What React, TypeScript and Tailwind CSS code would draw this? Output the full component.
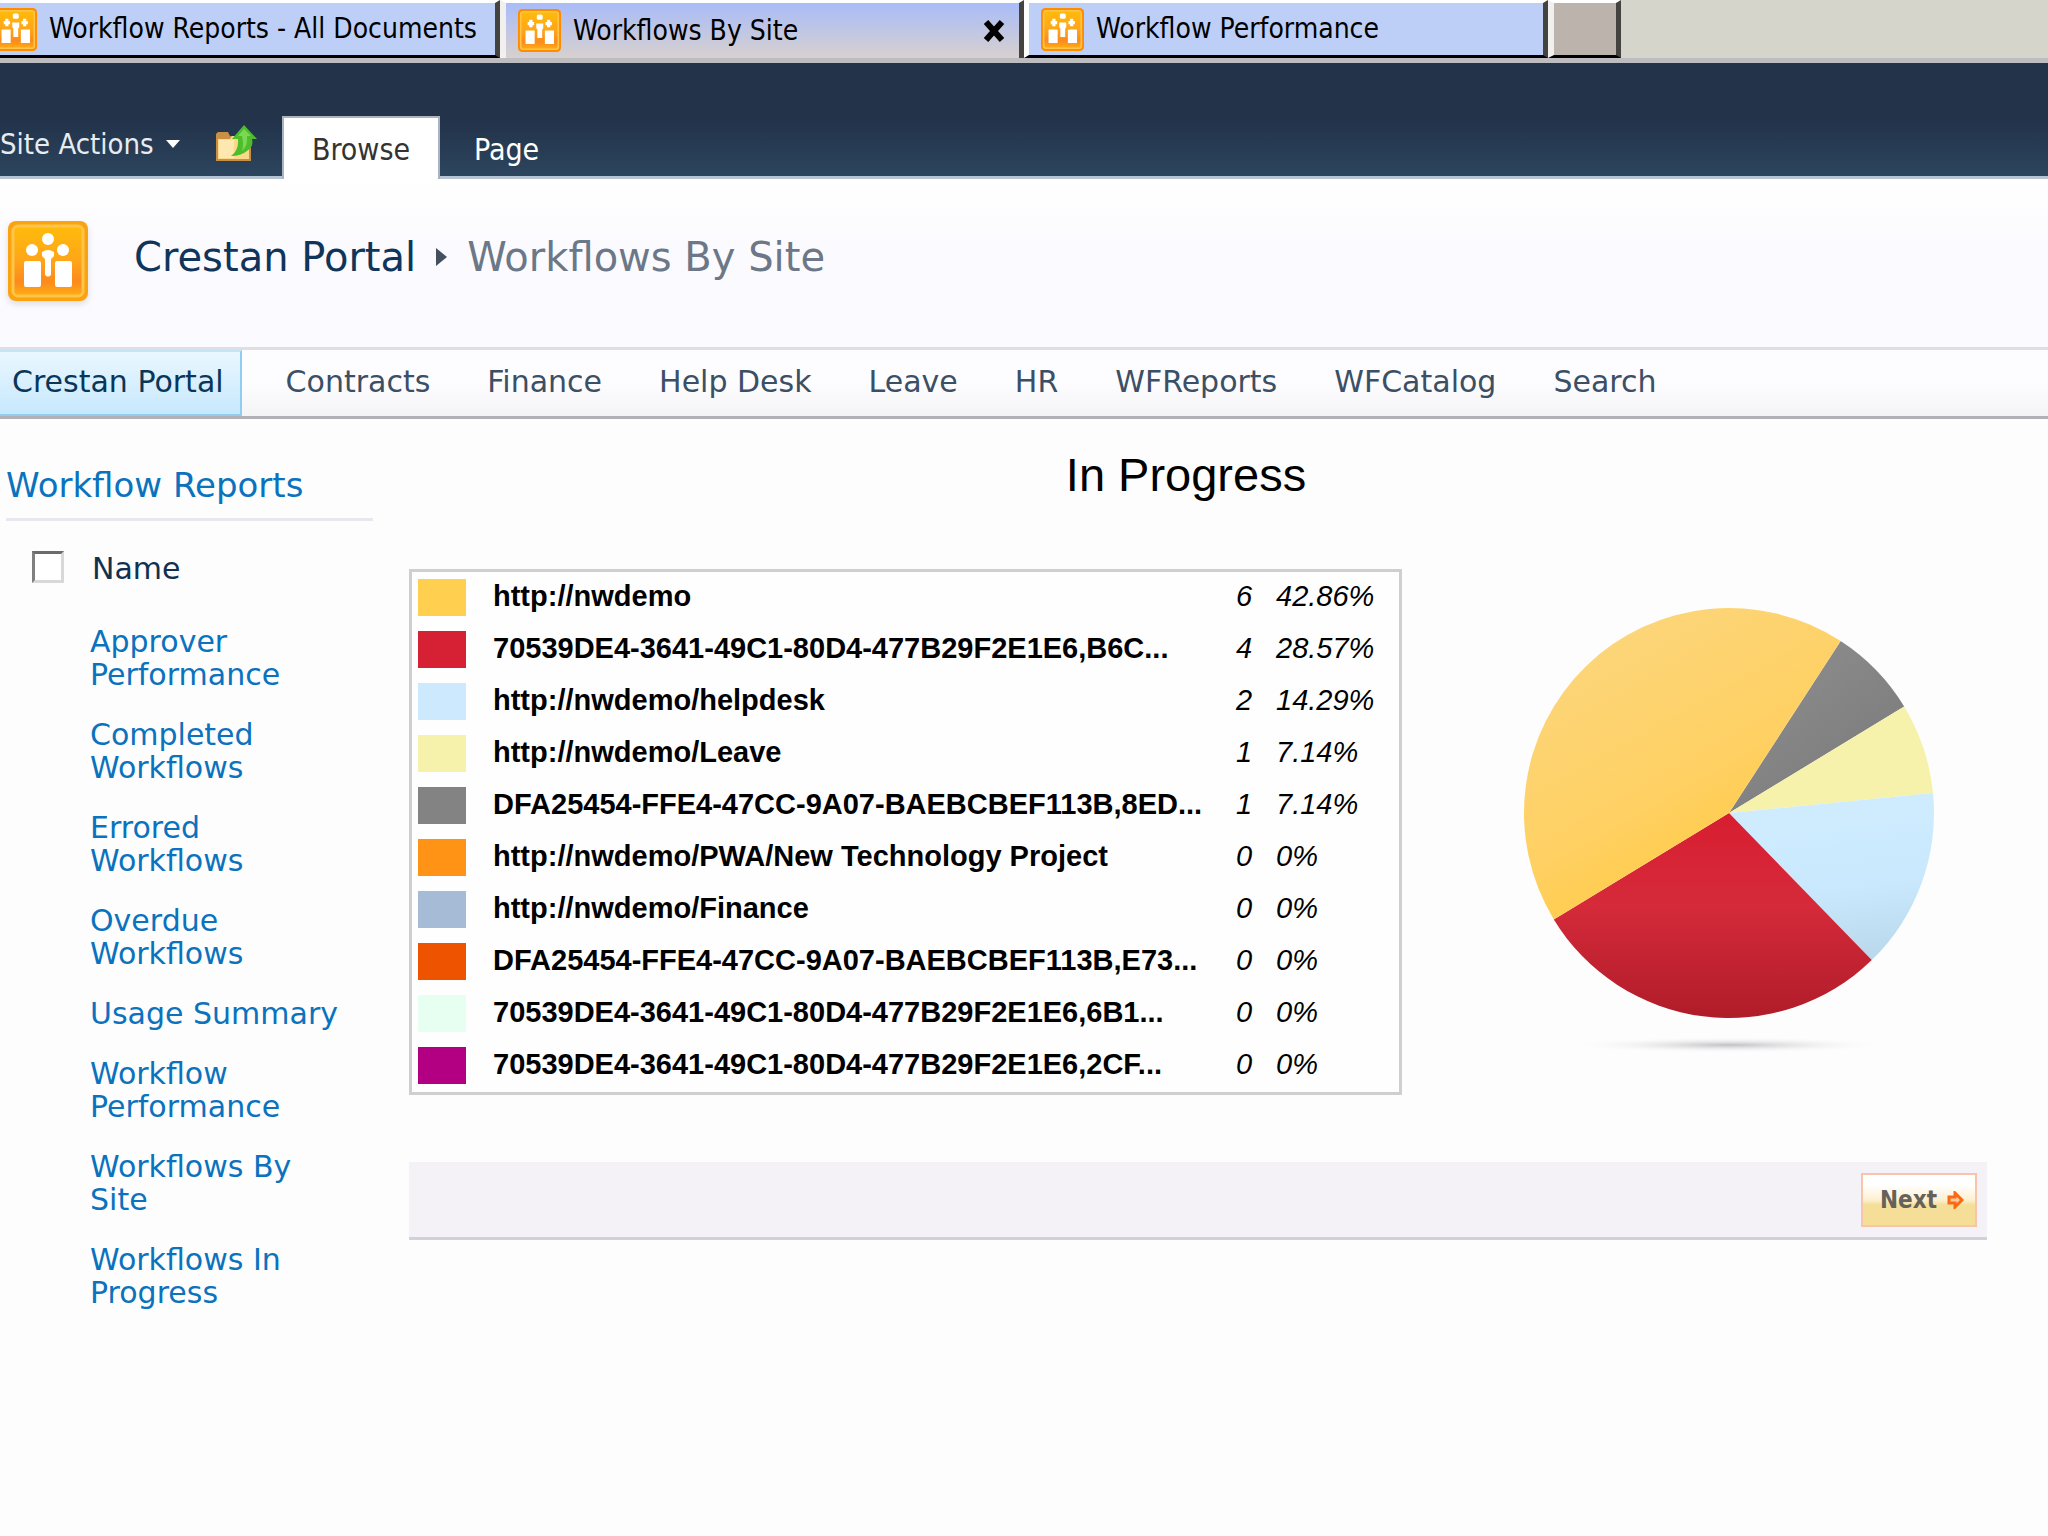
import React, { useState } from 'react';

const tabs = [
  { title: 'Workflow Reports - All Documents', className: 'w-[500px] pl-0', icon: '-ml-1.5' },
  { title: 'Workflows By Site', className: 'w-[524px] pl-3', icon: '' },
  { title: 'Workflow Performance', className: 'w-[524px] pl-3', icon: '' },
];

const navItems = ['Contracts', 'Finance', 'Help Desk', 'Leave', 'HR', 'WFReports', 'WFCatalog', 'Search'];

const reports = [
  'Approver Performance',
  'Completed Workflows',
  'Errored Workflows',
  'Overdue Workflows',
  'Usage Summary',
  'Workflow Performance',
  'Workflows By Site',
  'Workflows In Progress',
];

const sites = [
  { color: 'bg-[#ffcf50]', name: 'http://nwdemo', count: 6, percent: '42.86%' },
  { color: 'bg-[#d62033]', name: '70539DE4-3641-49C1-80D4-477B29F2E1E6,B6C...', count: 4, percent: '28.57%' },
  { color: 'bg-[#cde9fd]', name: 'http://nwdemo/helpdesk', count: 2, percent: '14.29%' },
  { color: 'bg-[#f6f2ab]', name: 'http://nwdemo/Leave', count: 1, percent: '7.14%' },
  { color: 'bg-[#838383]', name: 'DFA25454-FFE4-47CC-9A07-BAEBCBEF113B,8ED...', count: 1, percent: '7.14%' },
  { color: 'bg-[#ff9315]', name: 'http://nwdemo/PWA/New Technology Project', count: 0, percent: '0%' },
  { color: 'bg-[#a5bbd6]', name: 'http://nwdemo/Finance', count: 0, percent: '0%' },
  { color: 'bg-[#ee5400]', name: 'DFA25454-FFE4-47CC-9A07-BAEBCBEF113B,E73...', count: 0, percent: '0%' },
  { color: 'bg-[#e6fff0]', name: '70539DE4-3641-49C1-80D4-477B29F2E1E6,6B1...', count: 0, percent: '0%' },
  { color: 'bg-[#b30083]', name: '70539DE4-3641-49C1-80D4-477B29F2E1E6,2CF...', count: 0, percent: '0%' },
];

// clockwise from the top, in fourteenths of the circle
const slices = [
  { fill: 'url(#sliceGrey)', share: 1 },
  { fill: '#f6f2ab', share: 1 },
  { fill: 'url(#sliceBlue)', share: 2 },
  { fill: 'url(#sliceRed)', share: 4 },
  { fill: 'url(#sliceYellow)', share: 6 },
];

const SiteIcon: React.FC<{ className?: string; small?: boolean }> = ({ className = '', small = false }) => (
  <svg viewBox="0 0 80 80" className={`shrink-0 ${className}`} aria-hidden="true">
    <defs>
      <linearGradient id="siteIcon" x1="0" y1="0" x2="0" y2="1">
        <stop offset="0" stopColor="#ffbb0a" />
        <stop offset="0.5" stopColor="#ffa519" />
        <stop offset="0.8" stopColor="#fc8a1c" />
        <stop offset="1" stopColor="#ffae14" />
      </linearGradient>
    </defs>
    <rect x="0" y="0" width="80" height="80" rx="8" fill={small ? '#ff8c00' : '#fba211'} />
    <rect x="5" y="5" width="70" height="70" rx="5" fill="url(#siteIcon)" stroke="#ffc549" strokeWidth="3" />
    {small ? (
      <g fill="#fff">
        <rect x="35" y="10" width="11" height="10" rx="3" />
        <path d="M21 20 H27 V24 H30 V30 H27 V34 H21 V30 H18 V24 H21 Z" />
        <path d="M54 20 H60 V24 H63 V30 H60 V34 H54 V30 H51 V24 H54 Z" />
        <path d="M34 27 H47 V36 L45 38 V54 H36 V38 L34 36 Z" />
        <rect x="14" y="40" width="17" height="25" rx="1" />
        <rect x="50" y="40" width="17" height="25" rx="1" />
      </g>
    ) : (
      <g fill="#fff">
        <circle cx="40" cy="18" r="6" />
        <circle cx="24" cy="29" r="6" />
        <circle cx="55" cy="29" r="6" />
        <path d="M34 31 Q40 27 46 31 L46 35 L43 38 V54 Q40 57 37 54 V38 L34 35 Z" />
        <rect x="16" y="40" width="17" height="26" rx="2" />
        <rect x="47" y="40" width="17" height="26" rx="2" />
      </g>
    )}
  </svg>
);

const FolderUpIcon: React.FC = () => (
  <svg viewBox="0 0 44 38" className="h-[38px] w-11" aria-hidden="true">
    <path d="M2 9 L4 7 H14 L16 11 H37 V36 H2 Z" fill="#c98f45" />
    <path d="M4 14 H16 L18 11 H35 V34 H4 Z" fill="#fbd98a" />
    <path d="M5 15 H20 V33 H5 Z" fill="#ffe7b0" />
    <path d="M30 0 L43 14 H38 Q40 22 33 26 Q27 31 17 31 Q25 25 24 14 H18 Z" fill="#4dbd2c" />
    <path d="M30 4 L37 11 H33 Q34 21 28 26 Q30 20 28 11 H24 Z" fill="#7bd854" />
  </svg>
);

const BrowserTabs: React.FC = () => {
  const [active, setActive] = useState(1);

  return (
    <div className="flex h-[63px] border-b-[5px] border-[#bcbcc1] bg-[#d5d5cc] font-['DejaVu_Sans_Condensed','DejaVu_Sans',sans-serif] text-[28px] leading-8 text-black">
      {tabs.map((tab, index) => (
        <div
          key={tab.title}
          className={`flex items-center border-t-[3px] border-r-[5px] border-r-[#45433f] border-t-white pr-3.5 ${tab.className} ${
            active === index
              ? 'border-l-[6px] border-l-[#f1f0ee] bg-linear-to-b from-[#a9bcf8] to-[#d7d0ce]'
              : 'border-b-[3px] border-l-[5px] border-b-black border-l-white bg-[#bdcff7] first:border-l-0'
          }`}
        >
          <button type="button" onClick={() => setActive(index)} className="flex flex-1 items-center gap-3 text-left whitespace-nowrap">
            <SiteIcon small className={`size-[43px] ${tab.icon}`} />
            {tab.title}
          </button>
          {active === index && (
            <button type="button" aria-label="Close tab">
              <svg viewBox="0 0 22 22" className="size-[22px]">
                <path d="M3 2 L19 20 M19 2 L3 20" stroke="#000" strokeWidth="6" />
              </svg>
            </button>
          )}
        </div>
      ))}
      <button
        type="button"
        aria-label="New tab"
        className="w-[73px] border-t-[3px] border-r-[5px] border-b-[3px] border-l-[6px] border-t-white border-r-[#45433f] border-b-black border-l-[#f1f0ee] bg-[#bdb3ad]"
      />
    </div>
  );
};

const Ribbon: React.FC = () => (
  <div className="flex h-[116px] items-end bg-linear-to-b from-[#22334a] from-50% to-[#2d465f] font-['DejaVu_Sans_Condensed','DejaVu_Sans',sans-serif] text-[30px] leading-9 text-white">
    <div className="flex h-[63px] w-[282px] items-center justify-between border-b-[3px] border-[#b5c3d2] pr-6 pb-1">
      <button type="button" className="flex items-center gap-3 text-[29px] whitespace-nowrap text-[#e6ecf2]">
        Site Actions
        <svg viewBox="0 0 14 8" className="h-2 w-3.5">
          <path d="M0 0 H14 L7 8 Z" fill="#fff" />
        </svg>
      </button>
      <button type="button" aria-label="Navigate up">
        <FolderUpIcon />
      </button>
    </div>
    <button type="button" className="h-[63px] w-[158px] border-2 border-b-0 border-[#a9b3c2] bg-white pt-0.5 text-[#333]">
      Browse
    </button>
    <div className="flex h-[63px] flex-1 border-b-[3px] border-[#b5c3d2] pl-[34px]">
      <button type="button" className="pt-2">Page</button>
    </div>
  </div>
);

const TitleBar: React.FC = () => (
  <header className="flex h-[168px] items-start bg-linear-to-b from-white to-[#fbfafe] to-40% pt-[42px] pl-2">
    <SiteIcon className="size-20 drop-shadow-md" />
    <h1 className="ml-[46px] flex items-center gap-5 pt-2.5 text-[40px] leading-[52px] whitespace-nowrap text-[#10355a]">
      <a href="#portal">Crestan Portal</a>
      <svg viewBox="0 0 11 18" className="h-[18px] w-[11px]">
        <path d="M0 0 L11 9 L0 18 Z" fill="#44505e" />
      </svg>
      <span className="text-[#6c7787]">Workflows By Site</span>
    </h1>
  </header>
);

const TopNav: React.FC = () => (
  <nav className="flex h-[72px] items-stretch border-t-[3px] border-b-[3px] border-t-[#dfdee2] border-b-[#b2b2b6] bg-linear-to-b from-[#fdfcff] from-50% to-[#f4f3f6] text-[30px] leading-9 whitespace-nowrap text-[#3b4f65]">
    <a
      href="#portal"
      className="flex items-center border-y-2 border-r-2 border-[#91cdf0] border-t-[#c3e3f6] bg-linear-to-b from-[#eaf7ff] to-[#c6e8fd] pr-4 pb-0.5 pl-3 text-[#0b3658]"
    >
      Crestan Portal
    </a>
    <div className="flex items-center gap-[57px] pb-0.5 pl-11">
      {navItems.map((item) => (
        <a key={item} href={`#${item}`}>
          {item}
        </a>
      ))}
    </div>
  </nav>
);

const Sidebar: React.FC = () => (
  <aside className="w-[373px] shrink-0 pl-1.5 text-[30px] leading-[33px]">
    <h2 className="border-b-[3px] border-[#e9e6ee] pt-[46px] pb-[13px] text-[34px] leading-10 text-[#0b72bd]">
      Workflow Reports
    </h2>
    <label className="flex items-center gap-7 pt-[27px] pl-[26px] text-[#12304f]">
      <input
        type="checkbox"
        className="size-8 appearance-none border-[3px] border-t-[#6b6b6b] border-r-[#d8d8d8] border-b-[#d8d8d8] border-l-[#808080] bg-white"
      />
      <span className="pt-1">Name</span>
    </label>
    <ul className="mt-10 box-content flex w-[260px] flex-col gap-[27px] pl-[84px] text-[#0b72bd]">
      {reports.map((report) => (
        <li key={report} className="max-w-[250px]">
          <a href="#report">{report}</a>
        </li>
      ))}
    </ul>
  </aside>
);

const PieChart: React.FC = () => {
  const point = (angle: number) => {
    const radians = (angle * Math.PI) / 180;
    return `${205 * Math.sin(radians)} ${-205 * Math.cos(radians)}`;
  };
  let angle = 33;

  return (
    <svg viewBox="-210 -210 420 460" className="h-[460px] w-[420px]" role="img" aria-label="Workflows in progress by site">
      <defs>
        <linearGradient id="sliceYellow" gradientUnits="userSpaceOnUse" x1="-130" y1="-190" x2="0" y2="40">
          <stop offset="0" stopColor="#fcd67c" />
          <stop offset="0.7" stopColor="#ffd062" />
          <stop offset="1" stopColor="#ffcc49" />
        </linearGradient>
        <linearGradient id="sliceGrey" gradientUnits="userSpaceOnUse" x1="60" y1="-150" x2="130" y2="-60">
          <stop offset="0" stopColor="#8b8b8b" />
          <stop offset="1" stopColor="#7f7f80" />
        </linearGradient>
        <linearGradient id="sliceBlue" gradientUnits="userSpaceOnUse" x1="120" y1="0" x2="140" y2="150">
          <stop offset="0" stopColor="#cfecff" />
          <stop offset="0.5" stopColor="#c9e8fd" />
          <stop offset="1" stopColor="#b8d7ea" />
        </linearGradient>
        <linearGradient id="sliceRed" gradientUnits="userSpaceOnUse" x1="0" y1="0" x2="0" y2="205">
          <stop offset="0" stopColor="#d81e31" />
          <stop offset="0.45" stopColor="#d52a3a" />
          <stop offset="1" stopColor="#b01c29" />
        </linearGradient>
        <radialGradient id="pieShadow">
          <stop offset="0" stopColor="#c0c0c4" />
          <stop offset="1" stopColor="#fdfdfd" stopOpacity="0" />
        </radialGradient>
      </defs>
      {slices.map((slice) => {
        const start = angle;
        angle += (slice.share * 360) / 14;
        return <path key={slice.fill} d={`M0 0 L${point(start)} A205 205 0 0 1 ${point(angle)} Z`} fill={slice.fill} />;
      })}
      <ellipse cx="0" cy="232" rx="160" ry="8" fill="url(#pieShadow)" />
    </svg>
  );
};

const SiteTable: React.FC = () => (
  <table className="flex-1 border-separate border-spacing-0 border-[3px] border-[#cfcfd0] bg-[#fefefe] text-[29px] leading-9 text-black">
    <tbody>
      {sites.map((site) => (
        <tr key={site.name} className="h-[52px]">
          <td className="w-[81px] pb-0.5 pl-1.5">
            <div className={`h-[37px] w-12 ${site.color}`} />
          </td>
          <th scope="row" className="pb-[5px] text-left font-bold whitespace-nowrap">{site.name}</th>
          <td className="w-[40px] pb-[5px] italic">{site.count}</td>
          <td className="w-[123px] pb-[5px] italic">{site.percent}</td>
        </tr>
      ))}
    </tbody>
  </table>
);

const App: React.FC = () => {
  return (
    <div className="min-h-screen overflow-x-hidden bg-[#fdfdfd] font-['DejaVu_Sans',Verdana,sans-serif]">
      <BrowserTabs />
      <Ribbon />
      <TitleBar />
      <TopNav />
      <div className="flex gap-9">
        <Sidebar />
        <main className="mr-[61px] flex-1 font-['Liberation_Sans',Arial,sans-serif]">
          <h2 className="pt-7 pr-6 text-center text-[47px] leading-[56px] text-black">In Progress</h2>
          <div className="mt-[66px] flex items-center">
            <SiteTable />
            <div className="flex w-[585px] shrink-0 justify-center pt-0.5 pl-[68px]">
              <PieChart />
            </div>
          </div>
          <div className="mt-[67px] flex h-[78px] items-center justify-end border-b-[3px] border-[#d3d1d8] bg-[#f4f2f6] pr-2.5">
            <button
              type="button"
              className="flex h-[54px] items-center gap-2.5 border-2 border-[#f7c5aa] bg-linear-to-b from-white from-20% via-[#fdf0d0] via-50% to-[#f5de98] to-60% pr-[11px] pl-[17px] font-['DejaVu_Sans_Condensed','DejaVu_Sans',sans-serif] text-[24px] font-bold text-[#666259]"
            >
              Next
              <svg viewBox="0 0 17 18" className="h-[18px] w-[17px]">
                <path d="M2 6 H8 V2 L15 9 L8 16 V12 H2 Z" fill="#ffc9a0" stroke="#fb6a13" strokeWidth="3" />
              </svg>
            </button>
          </div>
        </main>
      </div>
    </div>
  );
};

export default App;
